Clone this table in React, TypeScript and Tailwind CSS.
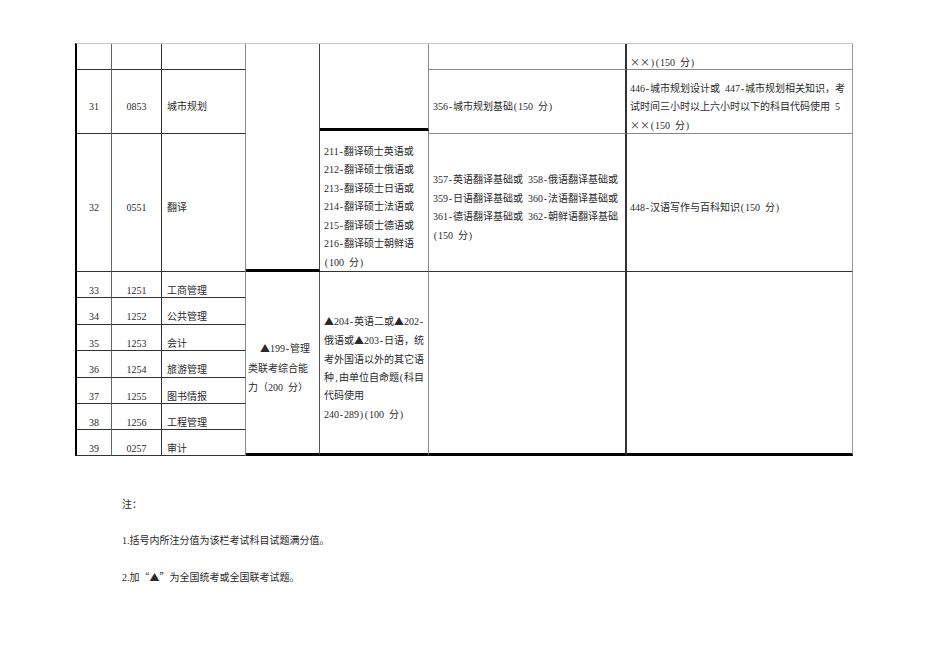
import React from "react";

const T = (s: string) =>
  Array.from(s).map((c, i) => {
    if ("-() ,".includes(c))
      return (
        <span key={i} className="inline-block w-[5px] text-center">
          {c === " " ? "\u00a0" : c}
        </span>
      );
    if ("×▲".includes(c))
      return (
        <span key={i} className="inline-block w-[10px] text-center font-['Noto_Sans_CJK_SC',sans-serif]">
          {c}
        </span>
      );
    return <React.Fragment key={i}>{c}</React.Fragment>;
  });

const rows = [
  ["33", "1251", "工商管理"],
  ["34", "1252", "公共管理"],
  ["35", "1253", "会计"],
  ["36", "1254", "旅游管理"],
  ["37", "1255", "图书情报"],
  ["38", "1256", "工程管理"],
  ["39", "0257", "审计"],
];

const rowStarts = [
  "row-start-5",
  "row-start-6",
  "row-start-7",
  "row-start-8",
  "row-start-9",
  "row-start-10",
  "row-start-11",
];

export default function App() {
  return (
    <div className="min-h-[672px] w-[950px] bg-white pt-[43px] font-['Liberation_Serif','Noto_Sans_CJK_SC',serif] text-[10px] leading-[18px] text-[#2a2a2a]">
      <div className="ml-[75px] grid w-fit grid-cols-[35px_50px_84px_74px_109px_198px_226px] grid-rows-[26px_61px_3px_138px_26px_27px_26px_27px_26px_26px_26px] border-t border-l-2 border-t-[#c8c8c8] border-l-black whitespace-nowrap">
        {/* Row A */}
        <div className="col-start-1 row-start-1 border-r border-b border-r-[#666] border-b-[#333]" />
        <div className="col-start-2 row-start-1 border-r border-b border-r-[#333] border-b-[#333]" />
        <div className="col-start-3 row-start-1 border-r border-b border-r-[#888] border-b-[#333]" />
        <div className="col-start-4 row-start-1 row-span-4 border-r border-b-[3px] border-r-[#444] border-b-black" />
        <div className="col-start-5 row-start-1 row-span-2 border-r border-b-[3px] border-r-[#888] border-b-black" />
        <div className="col-start-6 row-start-1 border-r-2 border-b border-r-[#333] border-b-[#888]" />
        <div className="col-start-7 row-start-1 flex items-center border-r border-b border-r-[#999] border-b-[#888] pt-[12px] pl-[3px]">
          <span>{T("××)(150 分)")}</span>
        </div>

        {/* Row 31 */}
        <div className="col-start-1 row-start-2 row-span-2 flex items-center justify-center border-r border-b border-r-[#666] border-b-[#333] pt-[11px]">31</div>
        <div className="col-start-2 row-start-2 row-span-2 flex items-center justify-center border-r border-b border-r-[#333] border-b-[#333] pt-[11px]">0853</div>
        <div className="col-start-3 row-start-2 row-span-2 flex items-center border-r border-b border-r-[#888] border-b-[#333] pt-[11px] pl-[5px]">城市规划</div>
        <div className="col-start-6 row-start-2 row-span-2 flex items-center border-r-2 border-b border-r-[#333] border-b-[#888] pt-[11px] pl-[4px]">
          <span>{T("356-城市规划基础(150 分)")}</span>
        </div>
        <div className="col-start-7 row-start-2 row-span-2 flex items-center border-r border-b border-r-[#999] border-b-[#888] pt-[11px] pl-[3px]">
          <div>
            <div>{T("446-城市规划设计或 447-城市规划相关知识，考")}</div>
            <div>{T("试时间三小时以上六小时以下的科目代码使用 5")}</div>
            <div>{T("××(150 分)")}</div>
          </div>
        </div>

        {/* Row 32 */}
        <div className="col-start-1 row-start-4 flex items-center justify-center border-r border-b border-r-[#666] border-b-[#333] pt-[11px]">32</div>
        <div className="col-start-2 row-start-4 flex items-center justify-center border-r border-b border-r-[#333] border-b-[#333] pt-[11px]">0551</div>
        <div className="col-start-3 row-start-4 flex items-center border-r border-b border-r-[#888] border-b-[#333] pt-[11px] pl-[5px]">翻译</div>
        <div className="col-start-5 row-start-3 row-span-2 flex items-center border-r border-b border-r-[#888] border-b-[#333] pt-[13px] pl-[4px] leading-[18.4px]">
          <div>
            <div>{T("211-翻译硕士英语或")}</div>
            <div>{T("212-翻译硕士俄语或")}</div>
            <div>{T("213-翻译硕士日语或")}</div>
            <div>{T("214-翻译硕士法语或")}</div>
            <div>{T("215-翻译硕士德语或")}</div>
            <div>{T("216-翻译硕士朝鲜语")}</div>
            <div>{T("(100 分)")}</div>
          </div>
        </div>
        <div className="col-start-6 row-start-4 flex items-center border-r-2 border-b border-r-[#333] border-b-[#333] pt-[11px] pl-[4px] leading-[18.5px]">
          <div>
            <div>{T("357-英语翻译基础或 358-俄语翻译基础或")}</div>
            <div>{T("359-日语翻译基础或 360-法语翻译基础或")}</div>
            <div>{T("361-德语翻译基础或 362-朝鲜语翻译基础")}</div>
            <div>{T("(150 分)")}</div>
          </div>
        </div>
        <div className="col-start-7 row-start-4 flex items-center border-r border-b border-r-[#999] border-b-[#333] pt-[11px] pl-[3px]">
          <span>{T("448-汉语写作与百科知识(150 分)")}</span>
        </div>

        {/* Rows 33-39 */}
        {rows.map((r, i) => (
          <React.Fragment key={r[0]}>
            <div className={`col-start-1 ${rowStarts[i]} flex items-center justify-center border-r border-b border-r-[#666] border-b-[#333] pt-[12px] leading-[14px]`}>{r[0]}</div>
            <div className={`col-start-2 ${rowStarts[i]} flex items-center justify-center border-r border-b border-r-[#333] border-b-[#333] pt-[12px] leading-[14px]`}>{r[1]}</div>
            <div className={`col-start-3 ${rowStarts[i]} flex items-center border-r border-b border-r-[#888] border-b-[#333] pt-[12px] pl-[5px] leading-[14px]`}>{r[2]}</div>
          </React.Fragment>
        ))}

        <div className="col-start-4 row-start-5 row-span-7 flex items-center border-r border-b-[3px] border-r-[#555] border-b-black pt-[11px] pl-[2px] leading-[19.5px]">
          <div>
            <div className="pl-[12px]">{T("▲199-管理")}</div>
            <div>类联考综合能</div>
            <div>{T("力（200 分）")}</div>
          </div>
        </div>
        <div className="col-start-5 row-start-5 row-span-7 flex items-center border-r border-b-[3px] border-r-[#888] border-b-black pt-[11px] pl-[4px] leading-[18.4px]">
          <div>
            <div>{T("▲204-英语二或▲202-")}</div>
            <div>{T("俄语或▲203-日语，统")}</div>
            <div>考外国语以外的其它语</div>
            <div>{T("种,由单位自命题(科目")}</div>
            <div>代码使用</div>
            <div>{T("240-289)(100 分)")}</div>
          </div>
        </div>
        <div className="col-start-6 row-start-5 row-span-7 border-r-2 border-b-[3px] border-r-[#333] border-b-black" />
        <div className="col-start-7 row-start-5 row-span-7 border-r border-b-[3px] border-r-[#999] border-b-black" />
      </div>

      <div className="mt-[40px] flex flex-col gap-[18px] pl-[122px]">
        <div>注：</div>
        <div>1.括号内所注分值为该栏考试科目试题满分值。</div>
        <div>
          2.加<span className="font-['Noto_Sans_CJK_SC',sans-serif]">“</span>
          {T("▲")}
          <span className="font-['Noto_Sans_CJK_SC',sans-serif]">”</span>为全国统考或全国联考试题。
        </div>
      </div>
    </div>
  );
}
